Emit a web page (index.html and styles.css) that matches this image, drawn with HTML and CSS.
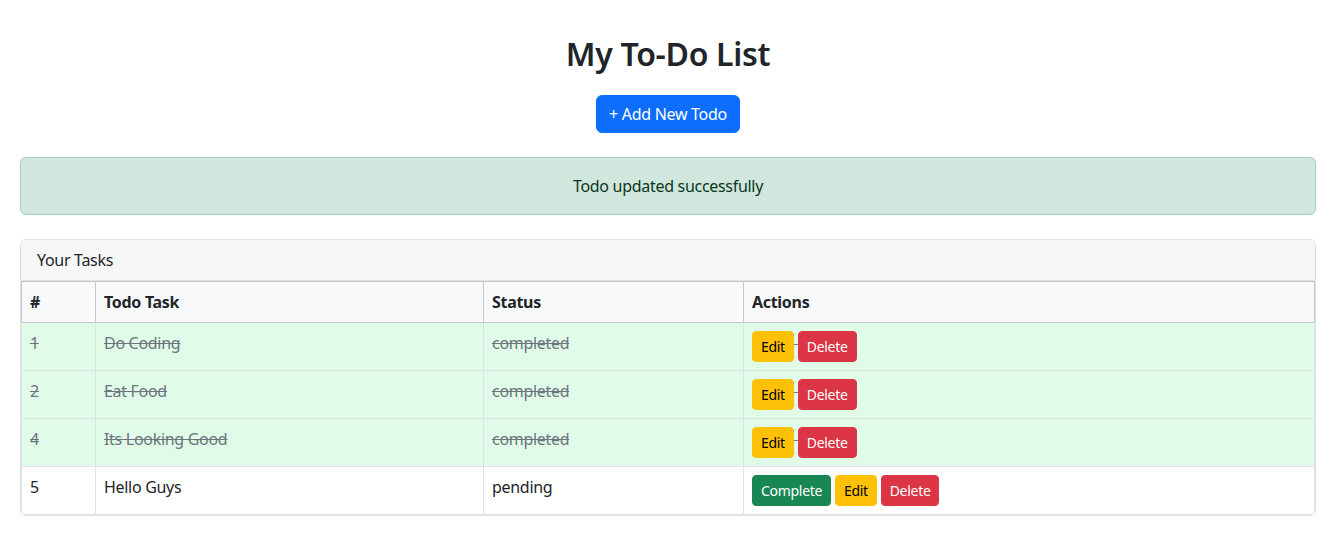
FILE: index.html
```html
<!DOCTYPE html>
<html lang="en">
<head>
<meta charset="utf-8">
<title>My To-Do List</title>
<link rel="stylesheet" href="styles.css">
</head>
<body>
<div class="container">
  <h1 class="title">My To-Do List</h1>
  <div class="add-wrap">
    <button class="btn btn-primary">+ Add New Todo</button>
  </div>
  <div class="alert">Todo updated successfully</div>
  <div class="card">
    <div class="card-header">Your Tasks</div>
    <table class="table">
      <thead>
        <tr>
          <th class="col-num">#</th>
          <th class="col-task">Todo Task</th>
          <th class="col-status">Status</th>
          <th>Actions</th>
        </tr>
      </thead>
      <tbody>
        <tr class="done">
          <td>1</td>
          <td>Do Coding</td>
          <td>completed</td>
          <td><button class="btn btn-sm btn-warning">Edit</button> <button class="btn btn-sm btn-danger">Delete</button></td>
        </tr>
        <tr class="done">
          <td>2</td>
          <td>Eat Food</td>
          <td>completed</td>
          <td><button class="btn btn-sm btn-warning">Edit</button> <button class="btn btn-sm btn-danger">Delete</button></td>
        </tr>
        <tr class="done">
          <td>4</td>
          <td>Its Looking Good</td>
          <td>completed</td>
          <td><button class="btn btn-sm btn-warning">Edit</button> <button class="btn btn-sm btn-danger">Delete</button></td>
        </tr>
        <tr>
          <td>5</td>
          <td>Hello Guys</td>
          <td>pending</td>
          <td><button class="btn btn-sm btn-success">Complete</button> <button class="btn btn-sm btn-warning">Edit</button> <button class="btn btn-sm btn-danger">Delete</button></td>
        </tr>
      </tbody>
    </table>
  </div>
</div>
</body>
</html>
```

FILE: styles.css
```css
* { box-sizing: border-box; }
body {
  margin: 0;
  font-family: "Noto Sans", "Open Sans", sans-serif;
  font-size: 16px;
  line-height: 1.5;
  color: #212529;
  background: #fff;
  letter-spacing: -0.3px;
}
.container {
  padding: 35px 20px 20px;
}
.title {
  margin: 0 0 22px;
  text-align: center;
  font-size: 32px;
  font-weight: 600;
  line-height: 1.2;
}
.add-wrap {
  text-align: center;
  margin-bottom: 24px;
}
.btn {
  display: inline-block;
  font-family: inherit;
  letter-spacing: inherit;
  font-size: 16px;
  line-height: 1.5;
  padding: 6px 12px;
  border: 1px solid transparent;
  border-radius: 6px;
  cursor: pointer;
  vertical-align: middle;
}
.btn-primary { background: #0d6efd; border-color: #0d6efd; color: #fff; }
.btn-sm {
  font-size: 14px;
  padding: 4px 8px;
  border-radius: 4px;
}
.btn-warning { background: #ffc107; border-color: #ffc107; color: #000; }
.btn-danger { background: #dc3545; border-color: #dc3545; color: #fff; }
.btn-success { background: #198754; border-color: #198754; color: #fff; }
.alert {
  padding: 16px;
  margin-bottom: 24px;
  background: #d1e7dd;
  border: 1px solid #a3cfbb;
  border-radius: 6px;
  color: #0a3622;
  text-align: center;
}
.card {
  border: 1px solid #dee2e6;
  border-radius: 6px;
  overflow: hidden;
}
.card-header {
  padding: 8px 16px;
  background: #f7f7f7;
  border-bottom: 1px solid #dee2e6;
}
.table {
  width: 100%;
  border-collapse: collapse;
  margin: 0;
}
.table th, .table td {
  padding: 8px;
  border: 1px solid #dee2e6;
  text-align: left;
  vertical-align: top;
}
.table thead th {
  background: #f8f9fa;
  border-color: #c6c7c8;
  font-weight: 700;
  vertical-align: middle;
}
.col-num { width: 74px; }
.col-task { width: 388px; }
.col-status { width: 260px; }
.table tr.done td {
  background: #e1fbe9;
  color: #6c757d;
  text-decoration: line-through;
}
```
